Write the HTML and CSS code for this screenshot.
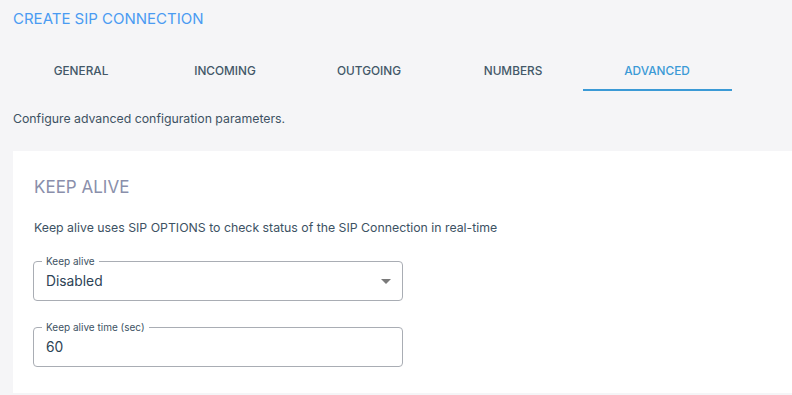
FILE: index.html
```html
<html lang="en">
<head>
  <meta charset="UTF-8" />
  <title>Create SIP Connection</title>
  <link rel="stylesheet" href="styles.css">
</head>
<body>
  <h1 class="page-title">CREATE SIP CONNECTION</h1>

  <nav class="tabs">
    <div class="tab">GENERAL</div>
    <div class="tab">INCOMING</div>
    <div class="tab">OUTGOING</div>
    <div class="tab">NUMBERS</div>
    <div class="tab active">ADVANCED</div>
  </nav>

  <p class="intro">Configure advanced configuration parameters.</p>

  <section class="card">
    <h2 class="card-title">KEEP ALIVE</h2>
    <p class="card-desc">Keep alive uses SIP OPTIONS to check status of the SIP Connection in real-time</p>

    <div class="field">
      <div class="field-value">Disabled</div>
      <span class="caret"></span>
      <fieldset class="outline"><legend>Keep alive</legend></fieldset>
    </div>

    <div class="field">
      <div class="field-value">60</div>
      <fieldset class="outline"><legend>Keep alive time (sec)</legend></fieldset>
    </div>
  </section>
</body>
</html>
```

FILE: styles.css
```css
* {
  margin: 0;
  padding: 0;
  box-sizing: border-box;
}

body {
  background: #f5f5f7;
  color: #3d5263;
  font-family: Inter, 'Noto Sans', sans-serif;
  padding: 10px 0 0 13px;
}

.page-title {
  font-size: 15px;
  font-weight: 400;
  color: #4a9bf2;
  line-height: 18px;
}

.tabs {
  display: flex;
  margin: 15px 0 0 -4px;
}

.tab {
  position: relative;
  width: 144px;
  height: 48px;
  padding-top: 7px;
  display: flex;
  align-items: center;
  justify-content: center;
  font-size: 11.8px;
  font-weight: 500;
  color: #435868;
}

.tab.active {
  color: #3b9ad6;
}

.tab.active::after {
  content: '';
  position: absolute;
  left: -2px;
  right: -3px;
  bottom: 0;
  height: 2px;
  background: #3b9ad6;
}

.intro {
  font-size: 12.3px;
  line-height: 16px;
  margin-top: 20px;
  color: #3d5263;
}

.card {
  background: #fff;
  margin-top: 24px;
  padding: 26px 20px 26px 20px;
  height: 242px;
}

.card-title {
  font-size: 17px;
  font-weight: 400;
  color: #8a8fab;
  line-height: 20px;
  margin-left: 1px;
}

.card-desc {
  font-size: 12.3px;
  line-height: 16px;
  margin-top: 23px;
  margin-left: 1px;
  color: #3d5263;
}

.field {
  position: relative;
  width: 370px;
  height: 40px;
  margin-top: 26px;
  display: flex;
  align-items: center;
  padding: 0 13px;
}

.card-desc + .field {
  margin-top: 25px;
}

.field-value {
  flex: 1;
  font-size: 13.8px;
  color: #2d4356;
}

.caret {
  width: 0;
  height: 0;
  border-left: 5px solid transparent;
  border-right: 5px solid transparent;
  border-top: 5px solid #7a7a7a;
  margin-right: -1px;
}

.outline {
  position: absolute;
  top: -5px;
  left: 0;
  right: 0;
  bottom: 0;
  border: 1px solid #a9adb4;
  border-radius: 4px;
  padding: 0 8px;
  pointer-events: none;
}

.outline legend {
  font-size: 10px;
  line-height: 10px;
  padding: 0 4px;
  color: #3d5263;
}
```
